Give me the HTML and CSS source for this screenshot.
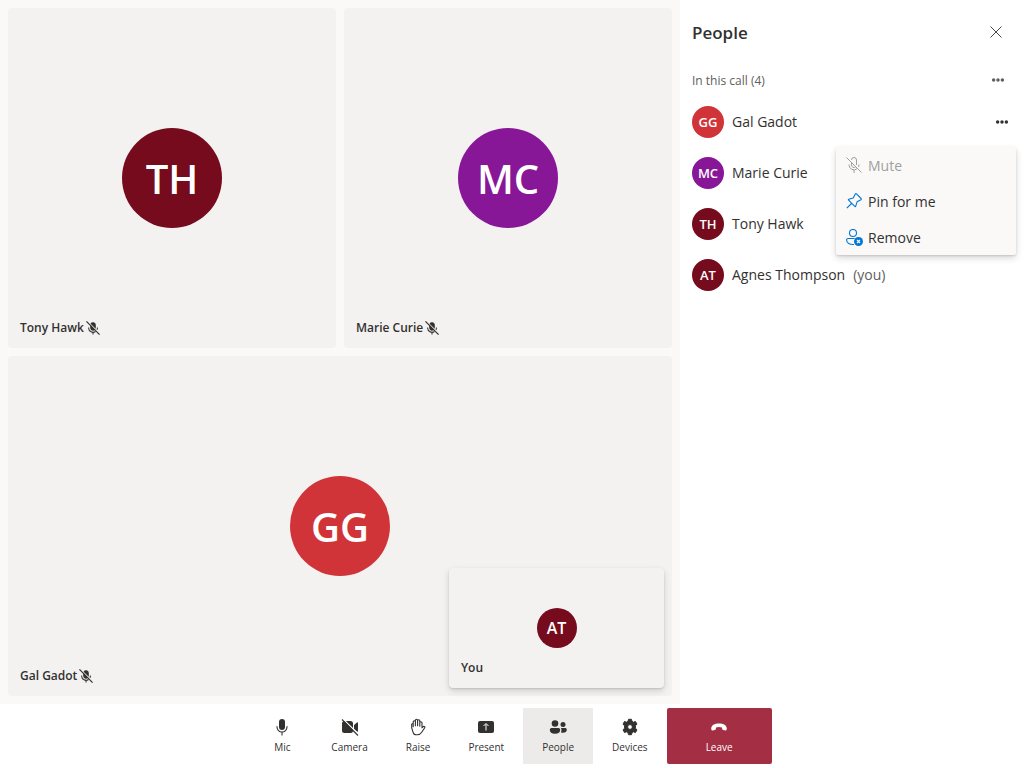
FILE: index.html
```html
<!DOCTYPE html>
<html lang="en">
<head>
<meta charset="utf-8">
<meta name="viewport" content="width=device-width, initial-scale=1">
<title>Call</title>
<link rel="stylesheet" href="styles.css">
</head>
<body>
<svg class="defs" aria-hidden="true">
  <symbol id="mic-off" viewBox="0 0 16 16">
    <path d="M4.800 4V8a3.200 3.200 0 0 0 5.300 2.200z" fill="currentColor"/>
    <path d="M5.200 3A3.200 3.200 0 0 1 11.200 4.200v3.800l-.1.900z" fill="currentColor"/>
    <path d="M3 7.500V8A5 5 0 0 0 10.900 12M13 7.500V8q0 1-.4 1.900M8 13V15.500" fill="none" stroke="currentColor" stroke-width="1.200"/>
    <path d="M.5.500l15 15" fill="none" stroke="currentColor" stroke-width="1.400"/>
  </symbol>
  <symbol id="dots" viewBox="0 0 16 16">
    <circle cx="3" cy="8" r="2" fill="currentColor"/><circle cx="8" cy="8" r="2" fill="currentColor"/><circle cx="13" cy="8" r="2" fill="currentColor"/>
  </symbol>
</svg>
<div class="app">
  <div class="content">
    <main class="stage">
      <section class="tile">
        <div class="avatar avatar-lg maroon">TH</div>
        <div class="tile-name">Tony Hawk<svg class="icon-sm"><use href="#mic-off"/></svg></div>
      </section>
      <section class="tile">
        <div class="avatar avatar-lg purple">MC</div>
        <div class="tile-name">Marie Curie<svg class="icon-sm"><use href="#mic-off"/></svg></div>
      </section>
      <section class="tile tile-wide">
        <div class="avatar avatar-lg red">GG</div>
        <div class="tile-name">Gal Gadot<svg class="icon-sm"><use href="#mic-off"/></svg></div>
      </section>
      <section class="tile self-view">
        <div class="avatar avatar-md maroon">AT</div>
        <div class="tile-name">You</div>
      </section>
    </main>
    <aside class="panel">
      <header class="panel-head">
        <h2>People</h2>
        <button class="icon-btn" type="button" aria-label="Close"><svg class="icon close" viewBox="0 0 16 16"><path d="M2.500 2.500l11 11M13.500 2.500l-11 11" fill="none" stroke="currentColor"/></svg></button>
      </header>
      <div class="panel-sub">
        <h3>In this call (4)</h3>
        <button class="icon-btn" type="button" aria-label="More options for everyone"><svg class="icon-dots"><use href="#dots"/></svg></button>
      </div>
      <ul class="people">
        <li class="person">
          <div class="avatar avatar-sm red">GG</div><span>Gal Gadot</span>
          <button class="icon-btn more" type="button" aria-label="More options for Gal Gadot"><svg class="icon-dots"><use href="#dots"/></svg></button>
          <div class="menu" role="menu">
            <button type="button" role="menuitem" disabled>
              <svg class="icon" viewBox="0 0 16 16" fill="none" stroke="currentColor"><path d="M5.500 5.500V8a2.500 2.500 0 0 0 4 2M5.500 3a2.500 2.500 0 0 1 5 0v5M3 7.500V8a5 5 0 0 0 8.200 3.700M13 7.500V8l-.5 2M8 13v3M.5.500l15 15"/></svg>Mute</button>
            <button type="button" role="menuitem">
              <svg class="icon accent" viewBox="0 0 16 16" fill="none" stroke="currentColor" stroke-width="1.100" stroke-linejoin="round"><path d="M9.300.9q.6-.6 1.200 0l4.600 4.600q.6.700-.2 1.200l-3.800 2.100-1.400 4.400q-.3.800-.9.200L2.600 7.200q-.6-.6.200-.9l4.400-1.400zM5.500 10.500L.8 15.200"/></svg>Pin for me</button>
            <button type="button" role="menuitem">
              <svg class="icon icon-wide accent" viewBox="0 0 17 17" fill="none" stroke="currentColor" stroke-width="1.100"><circle cx="7" cy="4" r="3.500"/><path d="M8.500 9.500H2.200Q.6 9.500.6 11.100c0 3 3 4.700 7.400 4.400"/><circle cx="12.500" cy="12.500" r="4.500" fill="currentColor" stroke="none"/><path d="M11 11l3 3M14 11l-3 3" stroke="#fff"/></svg>Remove</button>
          </div>
        </li>
        <li class="person"><div class="avatar avatar-sm purple">MC</div><span>Marie Curie</span></li>
        <li class="person"><div class="avatar avatar-sm maroon">TH</div><span>Tony Hawk</span></li>
        <li class="person"><div class="avatar avatar-sm maroon">AT</div><span>Agnes Thompson</span><span class="you">(you)</span></li>
      </ul>
    </aside>
  </div>
  <nav class="controls" aria-label="Call controls">
    <button type="button"><svg class="icon-ctl" viewBox="0 0 18 18"><rect x="6" y="1" width="6" height="11" rx="3" fill="currentColor"/><path d="M4 8.500V9a5 5 0 0 0 10 0v-.5M9 14v3" fill="none" stroke="currentColor" stroke-width="1.100" stroke-linecap="round"/></svg>Mic</button>
    <button type="button"><svg class="icon-ctl" viewBox="0 0 18 18"><rect x="1" y="3" width="11" height="12" rx="2.500" fill="currentColor"/><path d="M13 7l3-2.500q1-.5 1 .5v8q0 1-1 .5L13 11z" fill="currentColor"/><path d="M2 1l16 16" stroke="#fff" stroke-width="1.300"/><path d="M1 1.500l16 16" stroke="currentColor" stroke-width="1.100"/></svg>Camera</button>
    <button type="button"><svg class="icon-ctl" viewBox="0 0 18 18" fill="none" stroke="currentColor" stroke-width="1.100" stroke-linecap="round" stroke-linejoin="round"><path d="M5 9V4a1 1 0 0 1 2.200 0V8M7.200 8V2.500a1 1 0 0 1 2.200 0V8M9.400 8V3a1 1 0 0 1 2.200 0v5.500M11.600 8.500V5a1 1 0 0 1 2.200 0V10l1.300-1.200q.9-.5 1.500.3.300.5-.2 1.100L13.500 14.500Q12 17 9 17H8q-2.500 0-3.100-2.500L3.500 10V6.500a.8.800 0 0 1 1.500 0" transform="translate(-.8 -.2)"/></svg>Raise</button>
    <button type="button"><svg class="icon-ctl" viewBox="0 0 18 18"><rect x="1" y="3" width="16" height="12" rx="2" fill="currentColor"/><path d="M9 12.500V6M6.500 8L9 5.500 11.500 8" fill="none" stroke="#fff"/></svg>Present</button>
    <button type="button" class="active" aria-pressed="true"><svg class="icon-ctl" viewBox="0 0 18 18" fill="currentColor"><circle cx="6" cy="5.500" r="3.300"/><path d="M2.500 10h7q1.700 0 1.700 1.700 0 4-5.200 4t-5.200-4Q.8 10 2.500 10z"/><circle cx="14" cy="6.500" r="2.500"/><path d="M12 10h4.300q1.500 0 1.500 1.500 0 3.200-4 3.200-1 0-1.700-.3 1-2.200-.1-4.400z"/></svg>People</button>
    <button type="button"><svg class="icon-ctl" viewBox="0 0 18 18"><path fill="currentColor" fill-rule="evenodd" stroke="currentColor" stroke-linejoin="round" d="M7.500 1.300h3l.5 2.100 1.400.8 2.100-.7L16 6.200l-1.600 1.500v2.600l1.600 1.500-1.500 2.700-2.100-.7-1.400.8-.5 2.100h-3L7 14.600l-1.400-.8-2.100.7L2 11.800l1.600-1.500V7.700L2 6.200l1.500-2.700 2.100.7L7 3.400zM9 6.600a2.400 2.400 0 1 0 0 4.800 2.400 2.400 0 0 0 0-4.800z"/></svg>Devices</button>
    <button type="button" class="leave"><svg class="icon-ctl" viewBox="0 0 18 18"><path fill="currentColor" d="M1.200 10.800C1.200 7.500 4.500 5.600 9 5.600s7.800 1.900 7.800 5.200q0 2-1.400 1.700l-2.100-.5q-1-.2-1.100-1.100L12 9.400Q9 8.400 6 9.400l-.2 1.500q-.1.900-1.100 1.100l-2.100.5q-1.400.3-1.400-1.700z"/></svg>Leave</button>
  </nav>
</div>
</body>
</html>
```

FILE: styles.css
```css
* { box-sizing: border-box; }

body {
  margin: 0;
  font-family: "Open Sans", "Noto Sans", sans-serif;
  font-size: 14px;
  color: #323130;
  background: #fff;
}

button {
  font: inherit;
  color: inherit;
  background: none;
  border: 0;
  padding: 0;
  cursor: pointer;
}

svg { display: block; flex: none; }
h2, h3, ul { margin: 0; padding: 0; }
.defs { position: absolute; width: 0; height: 0; }

.app { display: flex; flex-direction: column; height: 100vh; }
.content { flex: 1; min-height: 0; display: flex; }

.stage {
  position: relative;
  flex: 1;
  display: grid;
  grid-template-columns: 1fr 1fr;
  grid-template-rows: 1fr 1fr;
  gap: 8px;
  padding: 8px;
  background: #faf9f8;
}

.tile {
  position: relative;
  display: flex;
  align-items: center;
  justify-content: center;
  background: #f3f2f1;
  border-radius: 4px;
}

.tile-wide { grid-column: span 2; }

.tile-name {
  position: absolute;
  left: 12px;
  bottom: 12px;
  display: flex;
  align-items: center;
  gap: 2px;
  font-size: 12px;
  line-height: 16px;
  font-weight: 600;
}

.self-view {
  position: absolute;
  right: 16px;
  bottom: 16px;
  width: 215px;
  height: 120px;
  box-shadow: 0 3px 7px rgba(0, 0, 0, .14), 0 1px 2px rgba(0, 0, 0, .12);
}

.avatar {
  flex: none;
  display: flex;
  align-items: center;
  justify-content: center;
  border-radius: 50%;
  color: #fff;
  font-weight: 600;
}

.avatar-lg { width: 100px; height: 100px; font-size: 40px; }
.avatar-md { width: 40px; height: 40px; font-size: 16px; }
.avatar-sm { width: 32px; height: 32px; font-size: 13px; }

.maroon { background: #750b1c; }
.purple { background: #881798; }
.red { background: #d13438; }

.icon { width: 16px; height: 16px; }
.icon-wide { width: 17px; height: 17px; margin-right: -1px; }
.icon-sm { width: 14px; height: 14px; }
.icon-dots { width: 14px; height: 14px; }
.icon-ctl { width: 18px; height: 18px; }
.accent { color: #0078d4; }
.close { color: #484644; }

.panel { width: 344px; padding: 16px 8px 0 12px; }

.panel-head, .panel-sub {
  display: flex;
  align-items: center;
  justify-content: space-between;
}

.panel-head { height: 32px; padding-right: 12px; }
.panel-head h2 { font-size: 17px; font-weight: 600; }
.panel-sub { height: 32px; margin-top: 16px; padding-right: 11px; color: #605e5c; }
.panel-sub h3 { font-size: 12px; font-weight: 400; }

.people { list-style: none; }

.person {
  position: relative;
  display: flex;
  align-items: center;
  gap: 8px;
  height: 51px;
}

.more { margin-left: auto; margin-right: 7px; }
.you { color: #605e5c; }

.menu {
  position: absolute;
  z-index: 1;
  top: 100%;
  right: 0;
  width: 180px;
  background: #faf9f8;
  border-radius: 2px;
  box-shadow: 0 3px 7px rgba(0, 0, 0, .16), 0 1px 2px rgba(0, 0, 0, .12);
}

.menu button {
  display: flex;
  align-items: center;
  gap: 6px;
  width: 100%;
  height: 36px;
  padding: 0 10px;
}

.menu button:disabled { color: #a19f9d; cursor: default; }

.controls {
  display: flex;
  justify-content: center;
  height: 64px;
  padding: 4px 0;
}

.controls button {
  display: flex;
  flex-direction: column;
  align-items: center;
  justify-content: center;
  gap: 3px;
  min-width: 60px;
  padding: 0 19px;
  font-size: 10px;
  line-height: 16px;
}

.controls .active { background: #edebe9; }

.controls .leave {
  min-width: 105px;
  color: #fff;
  background: #a42e43;
  border-radius: 2px;
}
```
